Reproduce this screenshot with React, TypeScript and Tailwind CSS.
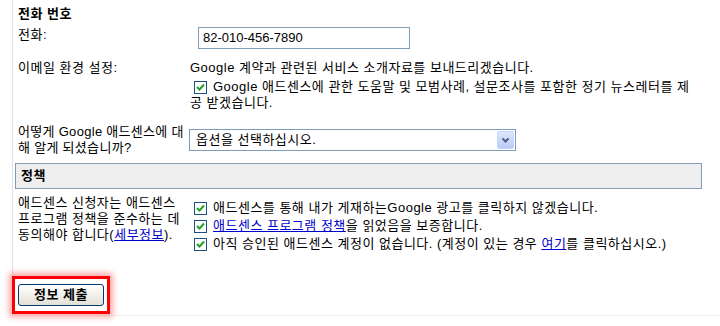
import type { ReactNode } from "react";

function CheckBox() {
  return (
    <span className="inline-flex h-[13px] w-[13px] shrink-0 items-center justify-center border border-[#1c5180] bg-white">
      <svg width="9" height="9" viewBox="0 0 9 9">
        <polyline
          points="1,4 3.5,6.5 8,1.5"
          fill="none"
          stroke="#21a121"
          strokeWidth="2"
        />
      </svg>
    </span>
  );
}

function CheckRow({ children }: { children: ReactNode }) {
  return (
    <div className="flex h-[18px] items-center whitespace-nowrap pl-[5px]">
      <CheckBox />
      <span className="ml-[6px]">{children}</span>
    </div>
  );
}

function Link({ children }: { children: ReactNode }) {
  return <a className="text-[#0000cc] underline">{children}</a>;
}

export default function App() {
  return (
    <div className="h-[326px] w-[720px] overflow-hidden bg-white font-['Liberation_Sans','Noto_Sans_CJK_KR',sans-serif] text-[13px] leading-[16px] tracking-[0.5px] text-black">
      <div className="ml-[12px] h-[316px] w-[708px] border-b border-l border-b-[#f2f2f2] border-l-[#e2e2e2] pl-[5px] pt-[6px]">
        <h3 className="font-bold">전화 번호</h3>

        <div className="mt-[5px] flex items-start">
          <div className="w-[171px]">전화:</div>
          <div className="ml-[9px] flex h-[22px] w-[212px] items-center border border-[#7f9db9] px-[4px] tracking-normal">
            82-010-456-7890
          </div>
        </div>

        <div className="mt-[11px] flex items-start">
          <div className="w-[171px]">이메일 환경 설정:</div>
          <div className="pl-[1px] whitespace-nowrap">
            <div>Google 계약과 관련된 서비스 소개자료를 보내드리겠습니다.</div>
            <div className="mt-[3px] flex items-center pl-[4px]">
              <CheckBox />
              <span className="ml-[6px]">
                Google 애드센스에 관한 도움말 및 모범사례, 설문조사를 포함한 정기 뉴스레터를 제
              </span>
            </div>
            <div>공 받겠습니다.</div>
          </div>
        </div>

        <div className="mt-[13px] flex items-start">
          <div className="w-[171px] whitespace-nowrap tracking-[0.3px]">
            어떻게 Google 애드센스에 대
            <br />해 알게 되셨습니까?
          </div>
          <div className="mt-[5px] flex h-[22px] w-[327px] items-center justify-between border border-[#7f9db9] pl-[6px] pr-[1px]">
            <span>옵션을 선택하십시오.</span>
            <span className="flex h-[18px] w-[17px] items-center justify-center rounded-[2px] border border-[#c3d3fd] bg-gradient-to-b from-[#dfe8fd] to-[#b9cbf5]">
              <svg width="9" height="7" viewBox="0 0 9 7">
                <polyline
                  points="1.5,1.5 4.5,4.5 7.5,1.5"
                  fill="none"
                  stroke="#4d6185"
                  strokeWidth="2"
                />
              </svg>
            </span>
          </div>
        </div>

        <div className="-ml-[3px] mt-[7px] flex h-[26px] w-[687px] items-center border border-[#7f9db9] bg-[#eeeeee] pl-[5px] font-bold">
          정책
        </div>

        <div className="mt-[6px] flex items-start">
          <div className="w-[171px] whitespace-nowrap">
            애드센스 신청자는 애드센스
            <br />
            프로그램 정책을 준수하는 데
            <br />
            동의해야 합니다(<Link>세부정보</Link>).
          </div>
          <div className="pt-[4px]">
            <CheckRow>애드센스를 통해 내가 게재하는Google 광고를 클릭하지 않겠습니다.</CheckRow>
            <CheckRow>
              <Link>애드센스 프로그램 정책</Link>을 읽었음을 보증합니다.
            </CheckRow>
            <CheckRow>
              아직 승인된 애드센스 계정이 없습니다. (계정이 있는 경우 <Link>여기</Link>를 클릭하십시오.)
            </CheckRow>
          </div>
        </div>

        <div className="-ml-[6px] mt-[23px] inline-block border-[3px] border-[#ff0000] px-[3px] py-[5px] shadow-[0_0_6px_3px_rgba(255,0,0,0.35)]">
          <button className="flex h-[22px] w-[86px] items-center justify-center rounded-[3px] border border-[#003c74] bg-gradient-to-b from-white to-[#e3e1d6] font-bold">
            정보 제출
          </button>
        </div>
      </div>
    </div>
  );
}
